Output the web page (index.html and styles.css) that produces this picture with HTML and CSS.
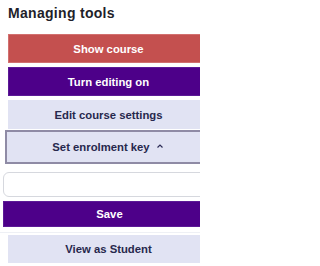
FILE: index.html
```html
<!DOCTYPE html>
<html>
<head>
<meta charset="utf-8">
<link rel="stylesheet" href="styles.css">
</head>
<body>
<div class="panel">
  <h2 class="title">Managing tools</h2>
  <div class="stack">
    <button class="btn btn-red">Show course</button>
    <button class="btn btn-purple">Turn editing on</button>
    <button class="btn btn-light">Edit course settings</button>
  </div>
  <button class="btn btn-light toggle">Set enrolment key <svg class="caret" width="8" height="6" viewBox="0 0 8 6"><path d="M1.5 4.5 L4 2 L6.5 4.5" fill="none" stroke="#2b2b55" stroke-width="1.2"/></svg></button>
  <div class="collapse">
    <input class="field" type="text">
    <button class="btn btn-purple save">Save</button>
  </div>
  <button class="btn btn-light student">View as Student</button>
</div>
</body>
</html>
```
FILE: styles.css
```css
html, body {
  margin: 0;
  padding: 0;
  overflow: hidden;
  background: #ffffff;
}
body {
  width: 200px;
  height: 266px;
  font-family: "Liberation Sans", Arial, sans-serif;
}
.panel {
  width: 230px;
  padding-top: 5px;
}
.title {
  margin: 0 0 13px 8px;
  font-size: 14px;
  font-weight: bold;
  letter-spacing: 0.3px;
  color: #1f1f2a;
  line-height: 16px;
}
.stack {
  display: flex;
  flex-direction: column;
  gap: 4px;
  margin-left: 8px;
}
.btn {
  display: flex;
  align-items: center;
  justify-content: center;
  width: 201px;
  height: 29px;
  border: 1px solid transparent;
  font-family: "Liberation Sans", Arial, sans-serif;
  font-size: 11.3px;
  font-weight: bold;
  padding: 0;
  margin: 0;
  box-sizing: border-box;
}
.btn-red {
  background: #c4504f;
  border-color: #d2706f;
  color: #ffffff;
}
.btn-purple {
  background: #4d0089;
  border-color: #5c1a96;
  color: #ffffff;
}
.btn-light {
  background: #e1e3f3;
  border-color: #e1e3f3;
  color: #27284d;
}
.toggle {
  margin: 1px 0 0 5px;
  width: 206px;
  height: 34px;
  border: 2px solid #8f8ba5;
  gap: 6px;
}
.caret {
  display: block;
  margin-top: -2px;
}
.collapse {
  margin-top: 1px;
  padding: 7px 0 5px 3px;
  border-bottom: 1px solid #eef0f5;
  display: flex;
  flex-direction: column;
  gap: 4px;
}
.field {
  display: block;
  width: 213px;
  height: 25px;
  box-sizing: border-box;
  border: 1px solid #d6d8de;
  border-radius: 6px;
  margin: 0;
  padding: 0 8px;
  background: #fff;
}
.save {
  width: 213px;
  height: 26px;
}
.student {
  margin: 2px 0 0 8px;
  height: 28px;
}
```
